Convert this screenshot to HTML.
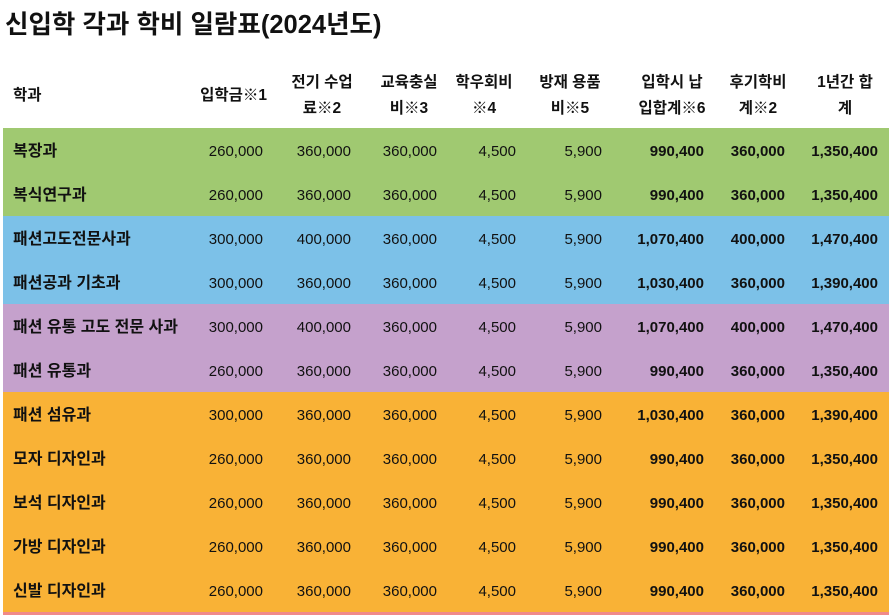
<!DOCTYPE html>
<html><head><meta charset="utf-8"><style>
body{margin:0;width:891px;height:615px;background:#fff;position:relative;overflow:hidden;font-family:"Liberation Sans","Noto Sans CJK KR",sans-serif;color:#111}
.t{position:absolute;left:5px;top:4px;font-size:25.5px;font-weight:bold}
.h{position:absolute;font-size:15.5px;font-weight:bold;text-align:center;line-height:26px;width:100px}
.r{position:absolute;left:3px;width:886px;height:44px}
.c{position:absolute;font-size:15px;line-height:44px;top:2px;white-space:nowrap}
.k{font-size:16px}
.n{text-align:right;width:90px}
.b{font-weight:bold}
</style></head><body>
<div class="t">신입학 각과 학비 일람표(2024년도)</div>
<div class="h" style="left:13px;top:83px;text-align:left">학과</div>
<div class="h" style="left:167px;top:83px;text-align:right">입학금※1</div>
<div class="h" style="left:272px;top:70px">전기 수업<br>료※2</div>
<div class="h" style="left:359px;top:70px">교육충실<br>비※3</div>
<div class="h" style="left:434px;top:70px">학우회비<br>※4</div>
<div class="h" style="left:520px;top:70px">방재 용품<br>비※5</div>
<div class="h" style="left:622px;top:70px">입학시 납<br>입합계※6</div>
<div class="h" style="left:708px;top:70px">후기학비<br>계※2</div>
<div class="h" style="left:795px;top:70px">1년간 합<br>계</div>
<div id="rows"></div>
<div style="position:absolute;left:3px;top:612px;width:886px;height:3px;background:#f08a8a"></div>
<script>
var d=[["복장과","#a0c971",260,360,990,360,"1,350,400"],["복식연구과","#a0c971",260,360,990,360,"1,350,400"],
["패션고도전문사과","#7cc1e8",300,400,"1,070",400,"1,470,400"],["패션공과 기초과","#7cc1e8",300,360,"1,030",360,"1,390,400"],
["패션 유통 고도 전문 사과","#c5a1cc",300,400,"1,070",400,"1,470,400"],["패션 유통과","#c5a1cc",260,360,990,360,"1,350,400"],
["패션 섬유과","#f9b236",300,360,"1,030",360,"1,390,400"],["모자 디자인과","#f9b236",260,360,990,360,"1,350,400"],
["보석 디자인과","#f9b236",260,360,990,360,"1,350,400"],["가방 디자인과","#f9b236",260,360,990,360,"1,350,400"],
["신발 디자인과","#f9b236",260,360,990,360,"1,350,400"]];
var h="";
d.forEach(function(r,i){
var rt=[263,351,437,516,602,704,785,878];
var v=[r[2]+",000",r[3]+",000","360,000","4,500","5,900",r[4]+",400",r[5]+",000",r[6]];
h+='<div class="r" style="top:'+(128+44*i)+'px;background:'+r[1]+'"><div class="c k b" style="left:10px">'+r[0]+'</div>';
v.forEach(function(x,j){h+='<div class="c n'+(j>=5?' b':'')+'" style="left:'+(rt[j]-93)+'px">'+x+'</div>';});
h+='</div>';});
document.getElementById("rows").innerHTML=h;
</script>
</body></html>
